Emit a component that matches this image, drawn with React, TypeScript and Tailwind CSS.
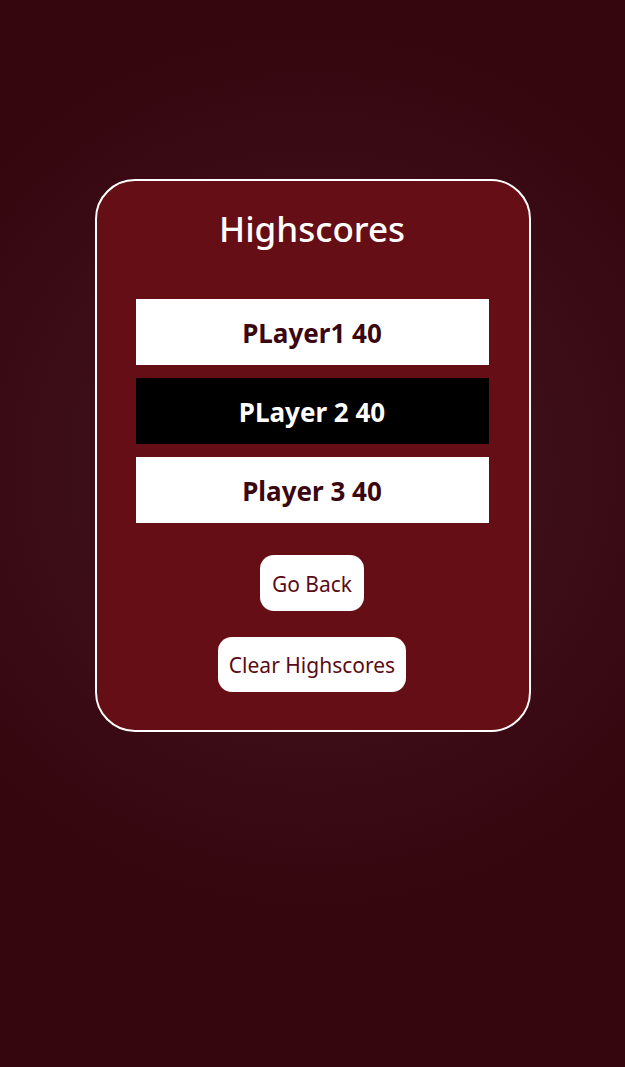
export default function App() {
  const scores = [
    { name: "PLayer1", score: 40, active: false },
    { name: "PLayer 2", score: 40, active: true },
    { name: "Player 3", score: 40, active: false },
  ];

  return (
    <div
      className="min-h-[1067px] w-full bg-[radial-gradient(circle_at_50%_44%,#43161f_0%,#3c0e18_35%,#36060f_65%)] flex justify-center pt-[179px]"
      style={{ fontFamily: '"Noto Sans", "Open Sans", sans-serif' }}
    >
      <div className="w-[436px] h-[553px] rounded-[40px] border-2 border-white bg-[#650e16] flex flex-col items-center pl-[39px] pr-[40px] pt-[25px]">
        <h1 className="text-[35px] leading-[46px] text-white font-medium">Highscores</h1>
        <ul className="w-full flex flex-col gap-[13px] mt-[47px]">
          {scores.map((s) => (
            <li
              key={s.name}
              className={
                s.active
                  ? "h-[66px] flex items-center justify-center pt-[3px] bg-black text-white text-[26px] font-bold"
                  : "h-[66px] flex items-center justify-center pt-[3px] bg-white text-[#3a0610] text-[26px] font-bold"
              }
            >
              {s.name} {s.score}
            </li>
          ))}
        </ul>
        <button className="mt-[32px] h-[56px] px-[12px] pt-[3px] rounded-[14px] bg-white text-[#5a0b14] text-[21px]">
          Go Back
        </button>
        <button className="mt-[26px] h-[55px] px-[11px] pt-[3px] rounded-[14px] bg-white text-[#5a0b14] text-[21px]">
          Clear Highscores
        </button>
      </div>
    </div>
  );
}
